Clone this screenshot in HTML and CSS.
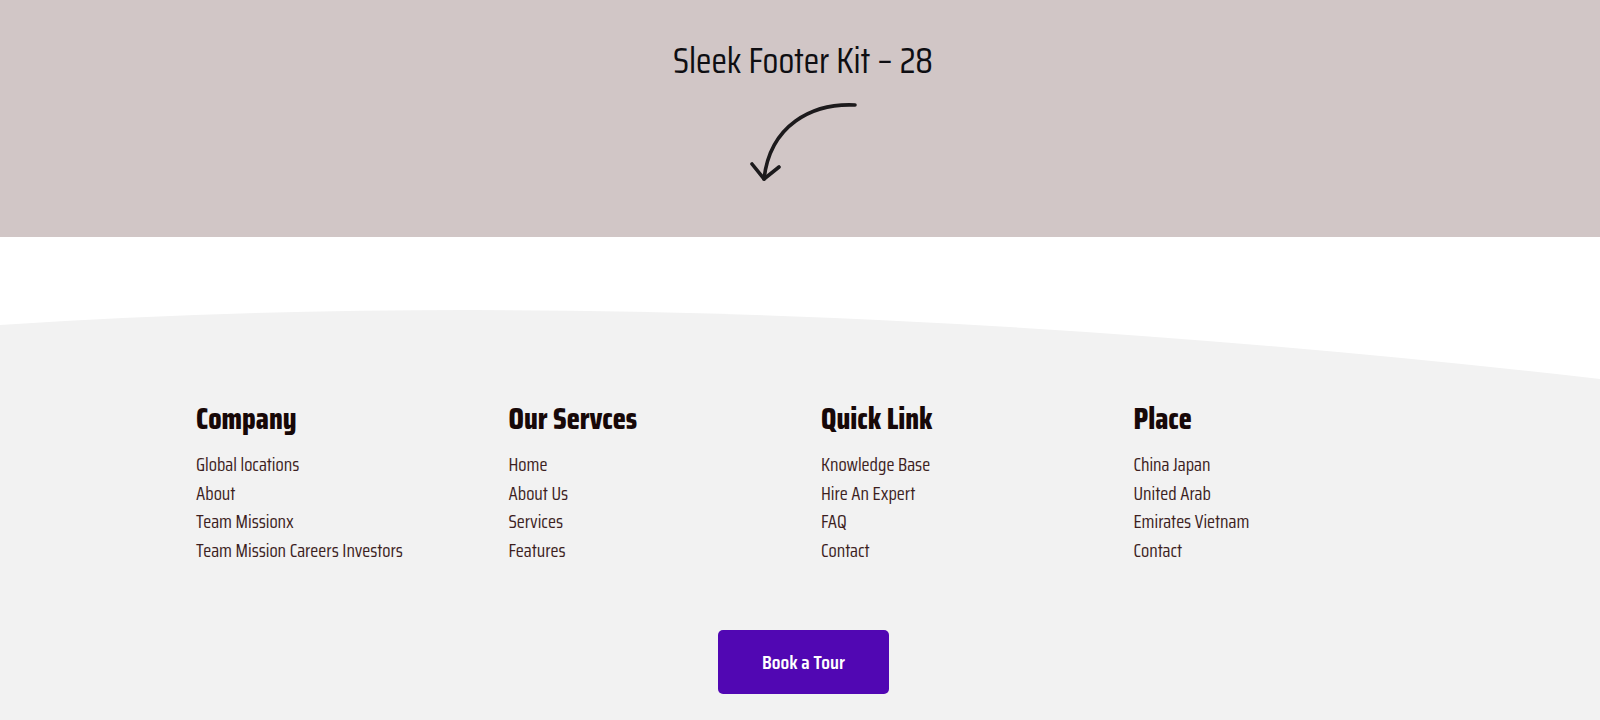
FILE: index.html
```html
<!DOCTYPE html>
<html lang="en">
<head>
<meta charset="utf-8">
<title>Sleek Footer Kit - 28</title>
<link rel="stylesheet" href="styles.css">
</head>
<body>
<header class="hero">
  <h1 class="hero-title">Sleek Footer Kit – 28</h1>
  <svg class="hero-arrow" width="120" height="90" viewBox="0 0 120 90" fill="none" stroke="#1c1a1c" stroke-width="3.6" stroke-linecap="round" stroke-linejoin="round">
    <path d="M115 5 C 72 3 30 25 24 79"/>
    <path d="M12 64 L24 79 L39 67"/>
  </svg>
</header>
<footer class="site-footer">
  <svg class="wave" viewBox="0 0 1600 142" preserveAspectRatio="none">
    <path d="M0 88 Q712 41 1600 142 L1600 143 L0 143 Z" fill="#f2f2f2"/>
  </svg>
  <div class="footer-body">
    <div class="cols">
      <div class="col">
        <h2 class="col-title">Company</h2>
        <ul class="links">
          <li>Global locations</li>
          <li>About</li>
          <li>Team Missionx</li>
          <li>Team Mission Careers Investors</li>
        </ul>
      </div>
      <div class="col">
        <h2 class="col-title">Our Servces</h2>
        <ul class="links">
          <li>Home</li>
          <li>About Us</li>
          <li>Services</li>
          <li>Features</li>
        </ul>
      </div>
      <div class="col">
        <h2 class="col-title">Quick Link</h2>
        <ul class="links">
          <li>Knowledge Base</li>
          <li>Hire An Expert</li>
          <li>FAQ</li>
          <li>Contact</li>
        </ul>
      </div>
      <div class="col">
        <h2 class="col-title">Place</h2>
        <ul class="links">
          <li>China Japan</li>
          <li>United Arab</li>
          <li>Emirates Vietnam</li>
          <li>Contact</li>
        </ul>
      </div>
    </div>
    <div class="cta">
      <a class="btn" href="#">Book a Tour</a>
    </div>
  </div>
</footer>
</body>
</html>
```
FILE: styles.css
```css
* { box-sizing: border-box; }
html, body { margin: 0; padding: 0; }
body {
  font-family: "Saira Condensed", "Roboto", "Liberation Sans", sans-serif;
  background: #ffffff;
  color: #3d1f1f;
}
.hero {
  height: 237px;
  background: #d1c6c6;
  display: flex;
  flex-direction: column;
  align-items: center;
  padding-top: 41px;
}
.hero-title {
  margin: 0;
  font-size: 36px;
  line-height: 40px;
  font-weight: 400;
  color: #0e0e12;
  padding-left: 6px;
}
.hero-arrow {
  display: block;
  margin-top: 19px;
  margin-left: 0;
}
.wave {
  display: block;
  width: 100%;
  height: 142px;
}
.footer-body {
  background: #f2f2f2;
  padding-top: 21px;
  height: 341px;
}
.cols {
  display: grid;
  grid-template-columns: repeat(4, 312.5px);
  padding-left: 196px;
}
.col-title {
  margin: 0;
  font-size: 30.5px;
  line-height: 36px;
  font-weight: 800;
  color: #170808;
}
.links {
  list-style: none;
  margin: 15px 0 0;
  padding: 0;
}
.links li {
  font-size: 18.7px;
  line-height: 28.5px;
  color: #3d1f1f;
}
.cta {
  display: flex;
  justify-content: center;
  margin-top: 65px;
  padding-left: 7px;
}
.btn {
  display: flex;
  align-items: center;
  justify-content: center;
  width: 171px;
  height: 64px;
  border-radius: 5px;
  background: #5107b3;
  color: #ffffff;
  font-size: 20px;
  font-weight: 600;
  text-decoration: none;
}
```
